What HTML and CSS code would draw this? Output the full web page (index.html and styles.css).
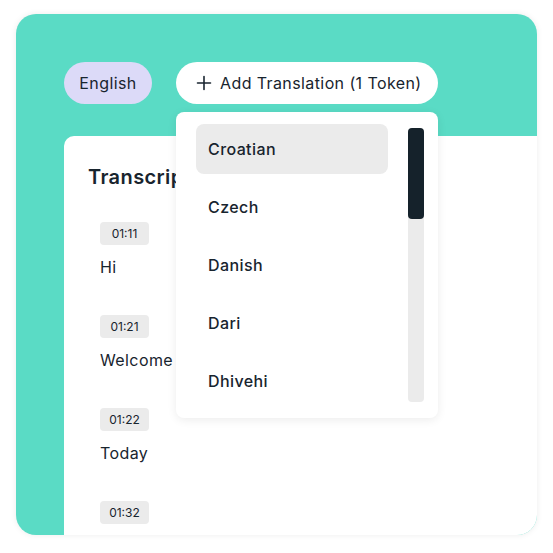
FILE: index.html
```html
<!DOCTYPE html>
<html lang="en">
<head>
    <meta charset="UTF-8">
    <meta name="viewport" content="width=device-width, initial-scale=1.0">
    <title>Transcript</title>
    <link rel="stylesheet" href="styles.css">
</head>
<body>
    <div class="frame">
        <div class="card">
            <div class="lang-bar">
                <div class="pill pill-lang">English</div>
                <div class="add-wrap">
                    <button class="pill pill-add">
                        <svg width="16" height="16" viewBox="0 0 16 16"><path d="M8 1.5v13M1.5 8h13" stroke="#1a2530" stroke-width="1.6" stroke-linecap="round"/></svg>
                        <span>Add Translation (1 Token)</span>
                    </button>
                    <div class="dropdown">
                        <div class="options">
                            <div class="option selected">Croatian</div>
                            <div class="option">Czech</div>
                            <div class="option">Danish</div>
                            <div class="option">Dari</div>
                            <div class="option">Dhivehi</div>
                        </div>
                        <div class="scrollbar"><div class="thumb"></div></div>
                    </div>
                </div>
            </div>
            <div class="panel">
                <h2>Transcript</h2>
                <div class="entries">
                    <div class="entry">
                        <span class="time">01:11</span>
                        <p>Hi</p>
                    </div>
                    <div class="entry">
                        <span class="time">01:21</span>
                        <p>Welcome</p>
                    </div>
                    <div class="entry">
                        <span class="time">01:22</span>
                        <p>Today</p>
                    </div>
                    <div class="entry">
                        <span class="time">01:32</span>
                    </div>
                </div>
            </div>
        </div>
    </div>
</body>
</html>
```

FILE: styles.css
```css
body {
    margin: 0;
    background: #fff;
    font-family: "Inter", "Noto Sans", sans-serif;
    letter-spacing: 0.4px;
    color: #18242e;
}
.frame {
    padding: 14px 16px;
}
.card {
    width: 521px;
    height: 521px;
    background: #5adbc5;
    border-radius: 20px;
    overflow: hidden;
    box-shadow: 0 0 6px rgba(0, 0, 0, 0.08);
    display: flex;
    flex-direction: column;
}
.lang-bar {
    display: flex;
    gap: 24px;
    padding: 48px 0 0 48px;
}
.pill {
    height: 42px;
    border-radius: 21px;
    border: none;
    font-family: inherit;
    letter-spacing: inherit;
    font-size: 16px;
    color: #18242e;
    display: flex;
    align-items: center;
    box-sizing: border-box;
}
.pill-lang {
    background: #dcdaf8;
    width: 88px;
    justify-content: center;
}
.add-wrap {
    position: relative;
}
.pill-add {
    background: #fff;
    width: 262px;
    padding: 0 0 0 20px;
    gap: 8px;
}
.dropdown {
    position: absolute;
    top: 50px;
    left: 0;
    width: 262px;
    height: 306px;
    box-sizing: border-box;
    background: #fff;
    border-radius: 8px;
    box-shadow: 0 2px 10px rgba(0, 0, 0, 0.08);
    padding: 12px 14px 16px 20px;
    display: flex;
    gap: 20px;
    z-index: 2;
}
.options {
    flex: 1;
    display: flex;
    flex-direction: column;
    gap: 8px;
}
.option {
    height: 50px;
    flex: none;
    display: flex;
    align-items: center;
    padding-left: 12px;
    border-radius: 8px;
    font-size: 16px;
    font-weight: 500;
}
.option.selected {
    background: #ebebeb;
}
.scrollbar {
    width: 16px;
    margin-top: 4px;
    background: #ebebeb;
    border-radius: 4px;
}
.thumb {
    height: 91px;
    background: #15222b;
    border-radius: 4px;
}
.panel {
    flex: 1;
    margin: 32px 0 0 48px;
    background: #fff;
    border-top-left-radius: 10px;
    padding: 24px 24px 0 24px;
}
.panel h2 {
    margin: 0;
    font-size: 20px;
    font-weight: 600;
    line-height: 34px;
}
.entries {
    padding: 28px 0 0 12px;
}
.entry {
    height: 93px;
}
.time {
    display: inline-block;
    width: 49px;
    height: 23px;
    line-height: 23px;
    text-align: center;
    background: #ebebeb;
    border-radius: 4px;
    font-size: 12px;
    letter-spacing: 0;
}
.entry p {
    margin: 10px 0 0;
    font-size: 16px;
    line-height: 24px;
}
```
